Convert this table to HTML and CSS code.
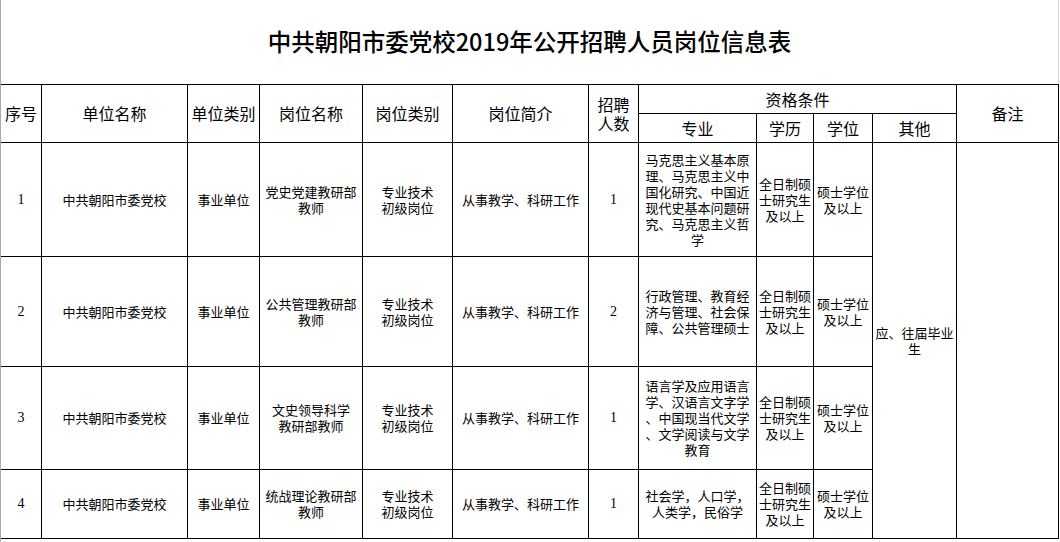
FILE: index.html
```html
<!DOCTYPE html>
<html lang="zh-CN">
<head>
<meta charset="utf-8">
<title>中共朝阳市委党校2019年公开招聘人员岗位信息表</title>
<link rel="stylesheet" href="styles.css">
</head>
<body>
<div class="sheet">
  <div class="title-row">
    <h1 class="title">中共朝阳市委党校2019年公开招聘人员岗位信息表</h1>
  </div>
  <div class="grid">
    <div class="cell head rs2">序号</div>
    <div class="cell head rs2">单位名称</div>
    <div class="cell head rs2">单位类别</div>
    <div class="cell head rs2">岗位名称</div>
    <div class="cell head rs2">岗位类别</div>
    <div class="cell head rs2">岗位简介</div>
    <div class="cell head rs2">招聘<br>人数</div>
    <div class="cell head cs4">资格条件</div>
    <div class="cell head rs2">备注</div>
    <div class="cell head">专业</div>
    <div class="cell head">学历</div>
    <div class="cell head">学位</div>
    <div class="cell head">其他</div>

    <div class="cell num">1</div>
    <div class="cell">中共朝阳市委党校</div>
    <div class="cell">事业单位</div>
    <div class="cell">党史党建教研部<br>教师</div>
    <div class="cell">专业技术<br>初级岗位</div>
    <div class="cell">从事教学、科研工作</div>
    <div class="cell num">1</div>
    <div class="cell">马克思主义基本原<br>理、马克思主义中<br>国化研究、中国近<br>现代史基本问题研<br>究、马克思主义哲<br>学</div>
    <div class="cell">全日制硕<br>士研究生<br>及以上</div>
    <div class="cell">硕士学位<br>及以上</div>
    <div class="cell rs4">应、往届毕业<br>生</div>
    <div class="cell rs4"></div>

    <div class="cell num">2</div>
    <div class="cell">中共朝阳市委党校</div>
    <div class="cell">事业单位</div>
    <div class="cell">公共管理教研部<br>教师</div>
    <div class="cell">专业技术<br>初级岗位</div>
    <div class="cell">从事教学、科研工作</div>
    <div class="cell num">2</div>
    <div class="cell">行政管理、教育经<br>济与管理、社会保<br>障、公共管理硕士</div>
    <div class="cell">全日制硕<br>士研究生<br>及以上</div>
    <div class="cell">硕士学位<br>及以上</div>

    <div class="cell num">3</div>
    <div class="cell">中共朝阳市委党校</div>
    <div class="cell">事业单位</div>
    <div class="cell">文史领导科学<br>教研部教师</div>
    <div class="cell">专业技术<br>初级岗位</div>
    <div class="cell">从事教学、科研工作</div>
    <div class="cell num">1</div>
    <div class="cell">语言学及应用语言<br>学、汉语言文字学<br>、中国现当代文学<br>、文学阅读与文学<br>教育</div>
    <div class="cell">全日制硕<br>士研究生<br>及以上</div>
    <div class="cell">硕士学位<br>及以上</div>

    <div class="cell num">4</div>
    <div class="cell">中共朝阳市委党校</div>
    <div class="cell">事业单位</div>
    <div class="cell">统战理论教研部<br>教师</div>
    <div class="cell">专业技术<br>初级岗位</div>
    <div class="cell">从事教学、科研工作</div>
    <div class="cell num">1</div>
    <div class="cell">社会学，人口学，<br>人类学，民俗学</div>
    <div class="cell">全日制硕<br>士研究生<br>及以上</div>
    <div class="cell">硕士学位<br>及以上</div>
  </div>
</div>
</body>
</html>
```

FILE: styles.css
```css
html, body {
  margin: 0;
  padding: 0;
  background: #fff;
}

body {
  font-family: "Noto Sans CJK SC", "Noto Sans", sans-serif;
  color: #000;
}

.sheet {
  width: 1059px;
  height: 542px;
  border-left: 1px solid #a9a9a9;
  box-sizing: border-box;
  overflow: hidden;
}

.title-row {
  height: 84px;
  border-right: 1px solid #d9d9d9;
  box-sizing: border-box;
  width: 1058px;
  display: flex;
  align-items: center;
  justify-content: center;
}

.title {
  margin: 0;
  font-size: 23.5px;
  font-weight: 500;
  line-height: 1;
}

.grid {
  display: grid;
  grid-template-columns: 40px 145px 71px 102px 89px 135px 49px 117px 56px 58px 83px 101px;
  grid-template-rows: 28px 28px 113px 109px 102px 68px;
  gap: 1px;
  background: #000;
  border-top: 1px solid #000;
  border-right: 1px solid #000;
  border-bottom: 1px solid #000;
  width: max-content;
}

.cell {
  background: #fff;
  display: flex;
  align-items: center;
  justify-content: center;
  text-align: center;
  padding: 0 2px;
  font-size: 13px;
  line-height: 16px;
  overflow: hidden;
}

.head {
  font-size: 16px;
  line-height: 19px;
}

.rs2 {
  grid-row: span 2;
}

.rs4 {
  grid-row: span 4;
}

.cs4 {
  grid-column: span 4;
}

.num {
  font-family: "Liberation Serif", serif;
  font-size: 14px;
}
```
